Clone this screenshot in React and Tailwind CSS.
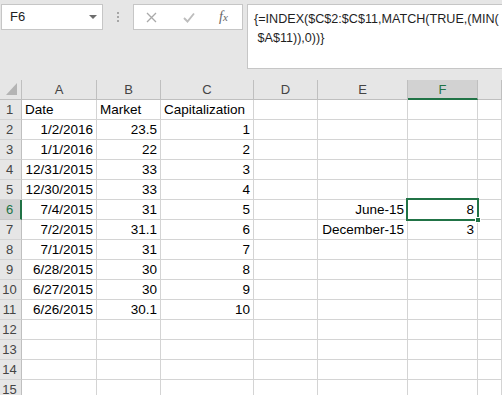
const colLetters = ["A", "B", "C", "D", "E", "F", ""];
const colWidths = ["w-[75px]", "w-[64px]", "w-[93px]", "w-[64px]", "w-[90px]", "w-[70px]", "flex-1"];

// each row: [A, B, C, D, E, F], r = right aligned
const rows = [
  [{ v: "Date" }, { v: "Market" }, { v: "Capitalization" }],
  [{ v: "1/2/2016", r: true }, { v: "23.5", r: true }, { v: "1", r: true }],
  [{ v: "1/1/2016", r: true }, { v: "22", r: true }, { v: "2", r: true }],
  [{ v: "12/31/2015", r: true }, { v: "33", r: true }, { v: "3", r: true }],
  [{ v: "12/30/2015", r: true }, { v: "33", r: true }, { v: "4", r: true }],
  [{ v: "7/4/2015", r: true }, { v: "31", r: true }, { v: "5", r: true }, {}, { v: "June-15", r: true }, { v: "8", r: true }],
  [{ v: "7/2/2015", r: true }, { v: "31.1", r: true }, { v: "6", r: true }, {}, { v: "December-15", r: true }, { v: "3", r: true }],
  [{ v: "7/1/2015", r: true }, { v: "31", r: true }, { v: "7", r: true }],
  [{ v: "6/28/2015", r: true }, { v: "30", r: true }, { v: "8", r: true }],
  [{ v: "6/27/2015", r: true }, { v: "30", r: true }, { v: "9", r: true }],
  [{ v: "6/26/2015", r: true }, { v: "30.1", r: true }, { v: "10", r: true }],
  [],
  [],
  [],
  [],
];

function FormulaBar() {
  return (
    <div className="flex h-[80px] items-start bg-[#e6e6e6] pt-[4px]">
      <div className="ml-[1px] flex h-[26px] w-[102px] shrink-0 items-center justify-between border border-[#c6c6c6] bg-white pl-[8px] pr-[5px]">
        <span className="text-[13px] text-[#222]">F6</span>
        <svg width="8" height="4" viewBox="0 0 8 4">
          <polygon points="0,0 8,0 4,4" fill="#6d6d6d" />
        </svg>
      </div>
      <div className="ml-[14px] mt-[8px] flex flex-col gap-[2px]">
        <span className="h-[2px] w-[2px] bg-[#a6a6a6]" />
        <span className="h-[2px] w-[2px] bg-[#a6a6a6]" />
        <span className="h-[2px] w-[2px] bg-[#a6a6a6]" />
      </div>
      <div className="ml-[14px] flex h-[26px] w-[110px] shrink-0 items-center border border-[#c6c6c6] bg-white">
        <svg className="ml-[12px]" width="11" height="11" viewBox="0 0 11 11">
          <path d="M1 1 L10 10 M10 1 L1 10" stroke="#a9a9a9" strokeWidth="1.3" fill="none" />
        </svg>
        <svg className="ml-[26px]" width="12" height="11" viewBox="0 0 12 11">
          <path d="M1 6 L4.5 9.5 L11 1.5" stroke="#bdbdbd" strokeWidth="1.9" fill="none" />
        </svg>
        <span className="ml-[24px] font-['Liberation_Serif',serif] text-[14px] italic leading-none text-[#666]">
          f<span className="text-[11px]">x</span>
        </span>
      </div>
      <div className="ml-[4px] h-[65px] flex-1 overflow-hidden border border-r-0 border-[#c6c6c6] bg-white pl-[6px] pt-[5px] text-[12.6px] leading-[19px] text-[#1f1f1f]">
        <div className="whitespace-pre">{"{=INDEX($C$2:$C$11,MATCH(TRUE,(MIN("}</div>
        <div className="whitespace-pre">{" $A$11)),0))}"}</div>
      </div>
    </div>
  );
}

function HeaderRow() {
  return (
    <div className="flex h-[20px]">
      <div className="relative w-[22px] shrink-0 border-r border-b border-[#bfbfbf] bg-[#e6e6e6]">
        <svg className="absolute left-[6px] top-[3px]" width="11" height="12" viewBox="0 0 11 12">
          <polygon points="11,0 11,12 0,12" fill="#b4b4b4" />
        </svg>
      </div>
      {colLetters.map((l, i) =>
        l === "F" ? (
          <div key={i} className={`${colWidths[i]} shrink-0 border-r border-b-2 border-r-[#bfbfbf] border-b-[#217346] bg-[#d2d2d2] text-center text-[13px] leading-[19px] text-[#217346]`}>
            {l}
          </div>
        ) : (
          <div key={i} className={`${colWidths[i]} shrink-0 border-r border-b border-[#bfbfbf] bg-[#e6e6e6] text-center text-[13px] leading-[19px] text-[#444]`}>
            {l}
          </div>
        )
      )}
    </div>
  );
}

function Row({ n, cells }) {
  const active = n === 6;
  return (
    <div className="flex h-[20px]">
      {active ? (
        <div className="w-[22px] shrink-0 border-r-2 border-b border-r-[#217346] border-b-[#c8c8c8] bg-[#d2d2d2] pr-[1px] text-center text-[13px] leading-[20px] text-[#217346]">
          {n}
        </div>
      ) : (
        <div className="w-[22px] shrink-0 border-r border-b border-r-[#bfbfbf] border-b-[#d4d4d4] bg-[#e6e6e6] pr-[2px] text-center text-[13px] leading-[20px] text-[#444]">
          {n}
        </div>
      )}
      {colWidths.map((w, i) => {
        const c = cells[i] || {};
        const selected = active && i === 5;
        return (
          <div
            key={i}
            className={`${w} relative shrink-0 whitespace-nowrap border-r border-b border-[#d4d4d4] bg-white px-[3px] text-[13.5px] leading-[20px] text-black ${c.r ? "text-right" : "text-left"} ${selected ? "z-10" : ""}`}
          >
            {c.v}
            {selected && (
              <>
                <div className="absolute -left-[2px] -right-[2px] -top-[2px] -bottom-[2px] border-2 border-[#217346]" />
                <div className="absolute -right-[4px] -bottom-[4px] h-[6px] w-[6px] border border-white bg-[#217346]" />
              </>
            )}
          </div>
        );
      })}
    </div>
  );
}

export default function App() {
  return (
    <div className="h-[395px] w-[502px] overflow-hidden bg-white font-['Liberation_Sans',Arial,sans-serif]">
      <FormulaBar />
      <HeaderRow />
      {rows.map((cells, i) => (
        <Row key={i} n={i + 1} cells={cells} />
      ))}
    </div>
  );
}
